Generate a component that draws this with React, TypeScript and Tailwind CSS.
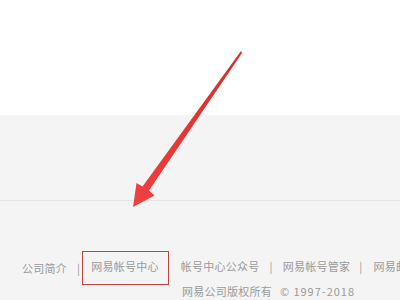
export default function App() {
  return (
    <div className="relative w-[400px] h-[300px] overflow-hidden bg-white font-['Noto_Sans_CJK_SC','Noto_Sans_CJK_JP',sans-serif] text-[#9a9a9a]">
      {/* 上部の白い領域 */}
      <div className="h-[115px] bg-white" />
      {/* グレーの帯 */}
      <div className="h-[86px] bg-[#f4f4f4] border-b border-[#e4e4e4]" />

      {/* フッター */}
      <div className="h-[99px] bg-[#f4f4f4] pt-[50px] text-[11px] tracking-[0.25px] whitespace-nowrap">
        <div className="flex items-center h-[34px] pl-[22px]">
          <span>公司简介</span>
          <span className="ml-[10px]">|</span>
          <span className="ml-[2px] h-[34px] flex items-center pl-[8px] pr-[9px] pb-[3px] border border-[#c4413f]">
            网易帐号中心
          </span>
          <span className="ml-[12px] pb-[3px]">帐号中心公众号</span>
          <span className="ml-[10px] pb-[3px]">|</span>
          <span className="ml-[10px] pb-[3px]">网易帐号管家</span>
          <span className="ml-[9px] pb-[3px]">|</span>
          <span className="ml-[11px] pb-[3px]">网易邮箱大师</span>
        </div>
        <div className="pl-[182px] -mt-[1px] leading-[14px]">
          网易公司版权所有
          <span className="ml-[8px]">©</span>
          <span className="ml-[4px] tracking-[1px]">1997-2018</span>
        </div>
      </div>

      {/* 赤い矢印 */}
      <svg
        className="absolute left-0 top-0 pointer-events-none"
        width="400"
        height="300"
        viewBox="0 0 400 300"
      >
        <defs>
          <linearGradient id="arrowFill" x1="0" y1="0" x2="1" y2="0">
            <stop offset="0" stopColor="#f04040" />
            <stop offset="1" stopColor="#d92b2b" />
          </linearGradient>
        </defs>
        <polygon
          points="241,51 242,53 149,190.5 154.5,195.5 133,207 136.5,183 142.5,186.5"
          fill="url(#arrowFill)"
        />
      </svg>
    </div>
  );
}
